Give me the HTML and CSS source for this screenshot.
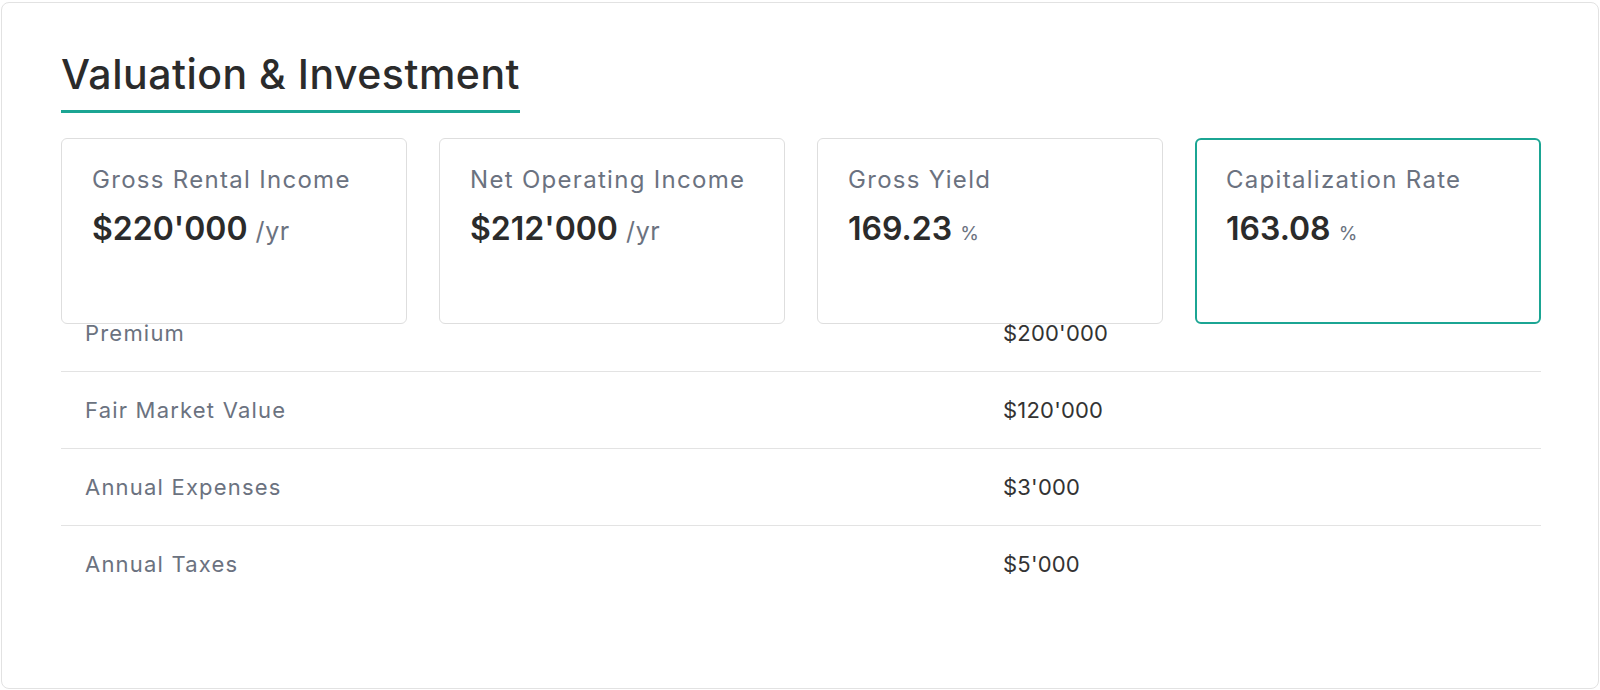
FILE: index.html
```html
<!DOCTYPE html>
<html lang="en">
<head>
    <meta charset="UTF-8">
    <meta name="viewport" content="width=device-width, initial-scale=1.0">
    <title>Valuation &amp; Investment</title>
    <link rel="stylesheet" href="styles.css">
</head>
<body>

<div class="panel">
    <h2 class="panel-title">Valuation &amp; Investment</h2>

    <div class="stats">
        <div class="stat">
            <div class="stat-label">Gross Rental Income</div>
            <div class="stat-value">$220'000 <span class="unit">/yr</span></div>
        </div>
        <div class="stat">
            <div class="stat-label">Net Operating Income</div>
            <div class="stat-value">$212'000 <span class="unit">/yr</span></div>
        </div>
        <div class="stat">
            <div class="stat-label">Gross Yield</div>
            <div class="stat-value">169.23 <span class="unit small">%</span></div>
        </div>
        <div class="stat active">
            <div class="stat-label">Capitalization Rate</div>
            <div class="stat-value">163.08 <span class="unit small">%</span></div>
        </div>
    </div>

    <table class="details">
        <tr>
            <td class="label">Premium</td>
            <td class="value">$200'000</td>
        </tr>
        <tr>
            <td class="label">Fair Market Value</td>
            <td class="value">$120'000</td>
        </tr>
        <tr>
            <td class="label">Annual Expenses</td>
            <td class="value">$3'000</td>
        </tr>
        <tr>
            <td class="label">Annual Taxes</td>
            <td class="value">$5'000</td>
        </tr>
    </table>
</div>

</body>
</html>
```

FILE: styles.css
```css
* {
    box-sizing: border-box;
}
body {
    font-family: 'Inter', 'Open Sans', sans-serif;
    margin: 0;
    padding: 2px 1px 0 1px;
    background: #fff;
    color: #2e2e2e;
}
.panel {
    height: 687px;
    border: 1px solid #e2e2e2;
    border-radius: 8px;
    padding: 45px 57px 0 59px; /* content runs 61 -> 1541 */
    background: #fff;
}
.panel-title {
    display: inline-block;
    margin: 0;
    font-size: 41px;
    font-weight: 500;
    letter-spacing: 0.5px;
    line-height: 52px;
    color: #2b2b2b;
    padding-bottom: 10px;
    border-bottom: 3px solid #1ba593;
}
.stats {
    display: grid;
    grid-template-columns: repeat(4, 1fr);
    gap: 32px;
    margin-top: 25px;
    height: 157px; /* cards are taller than this, they run over the table */
}
.stat {
    height: 186px;
    border: 1px solid #dedede;
    border-radius: 6px;
    padding: 26px 30px;
    background: #fff;
    position: relative;
    z-index: 1;
}
.stat.active {
    border: 2px solid #1ba593;
    padding: 25px 29px;
}
.stat-label {
    font-size: 24px;
    line-height: 30px;
    color: #6b7280;
    letter-spacing: 1.3px;
}
.stat-value {
    margin-top: 8px;
    font-size: 32px;
    font-weight: 600;
    line-height: 52px;
    color: #2b2b2b;
}
.unit {
    font-size: 25px;
    font-weight: 400;
    color: #6b7280;
    letter-spacing: 0.6px;
}
.unit.small {
    font-size: 19px;
}
.details {
    width: 100%;
    border-collapse: collapse;
}
.details td {
    font-size: 22px;
    line-height: 30px;
    padding: 23px 24px 23px 24px;
}
.details tr + tr td {
    border-top: 1px solid #e3e3e3;
}
.details .label {
    width: 918px;
    color: #6b7280;
    letter-spacing: 1.2px;
}
.details .value {
    color: #333;
    letter-spacing: 0.2px;
}
```
